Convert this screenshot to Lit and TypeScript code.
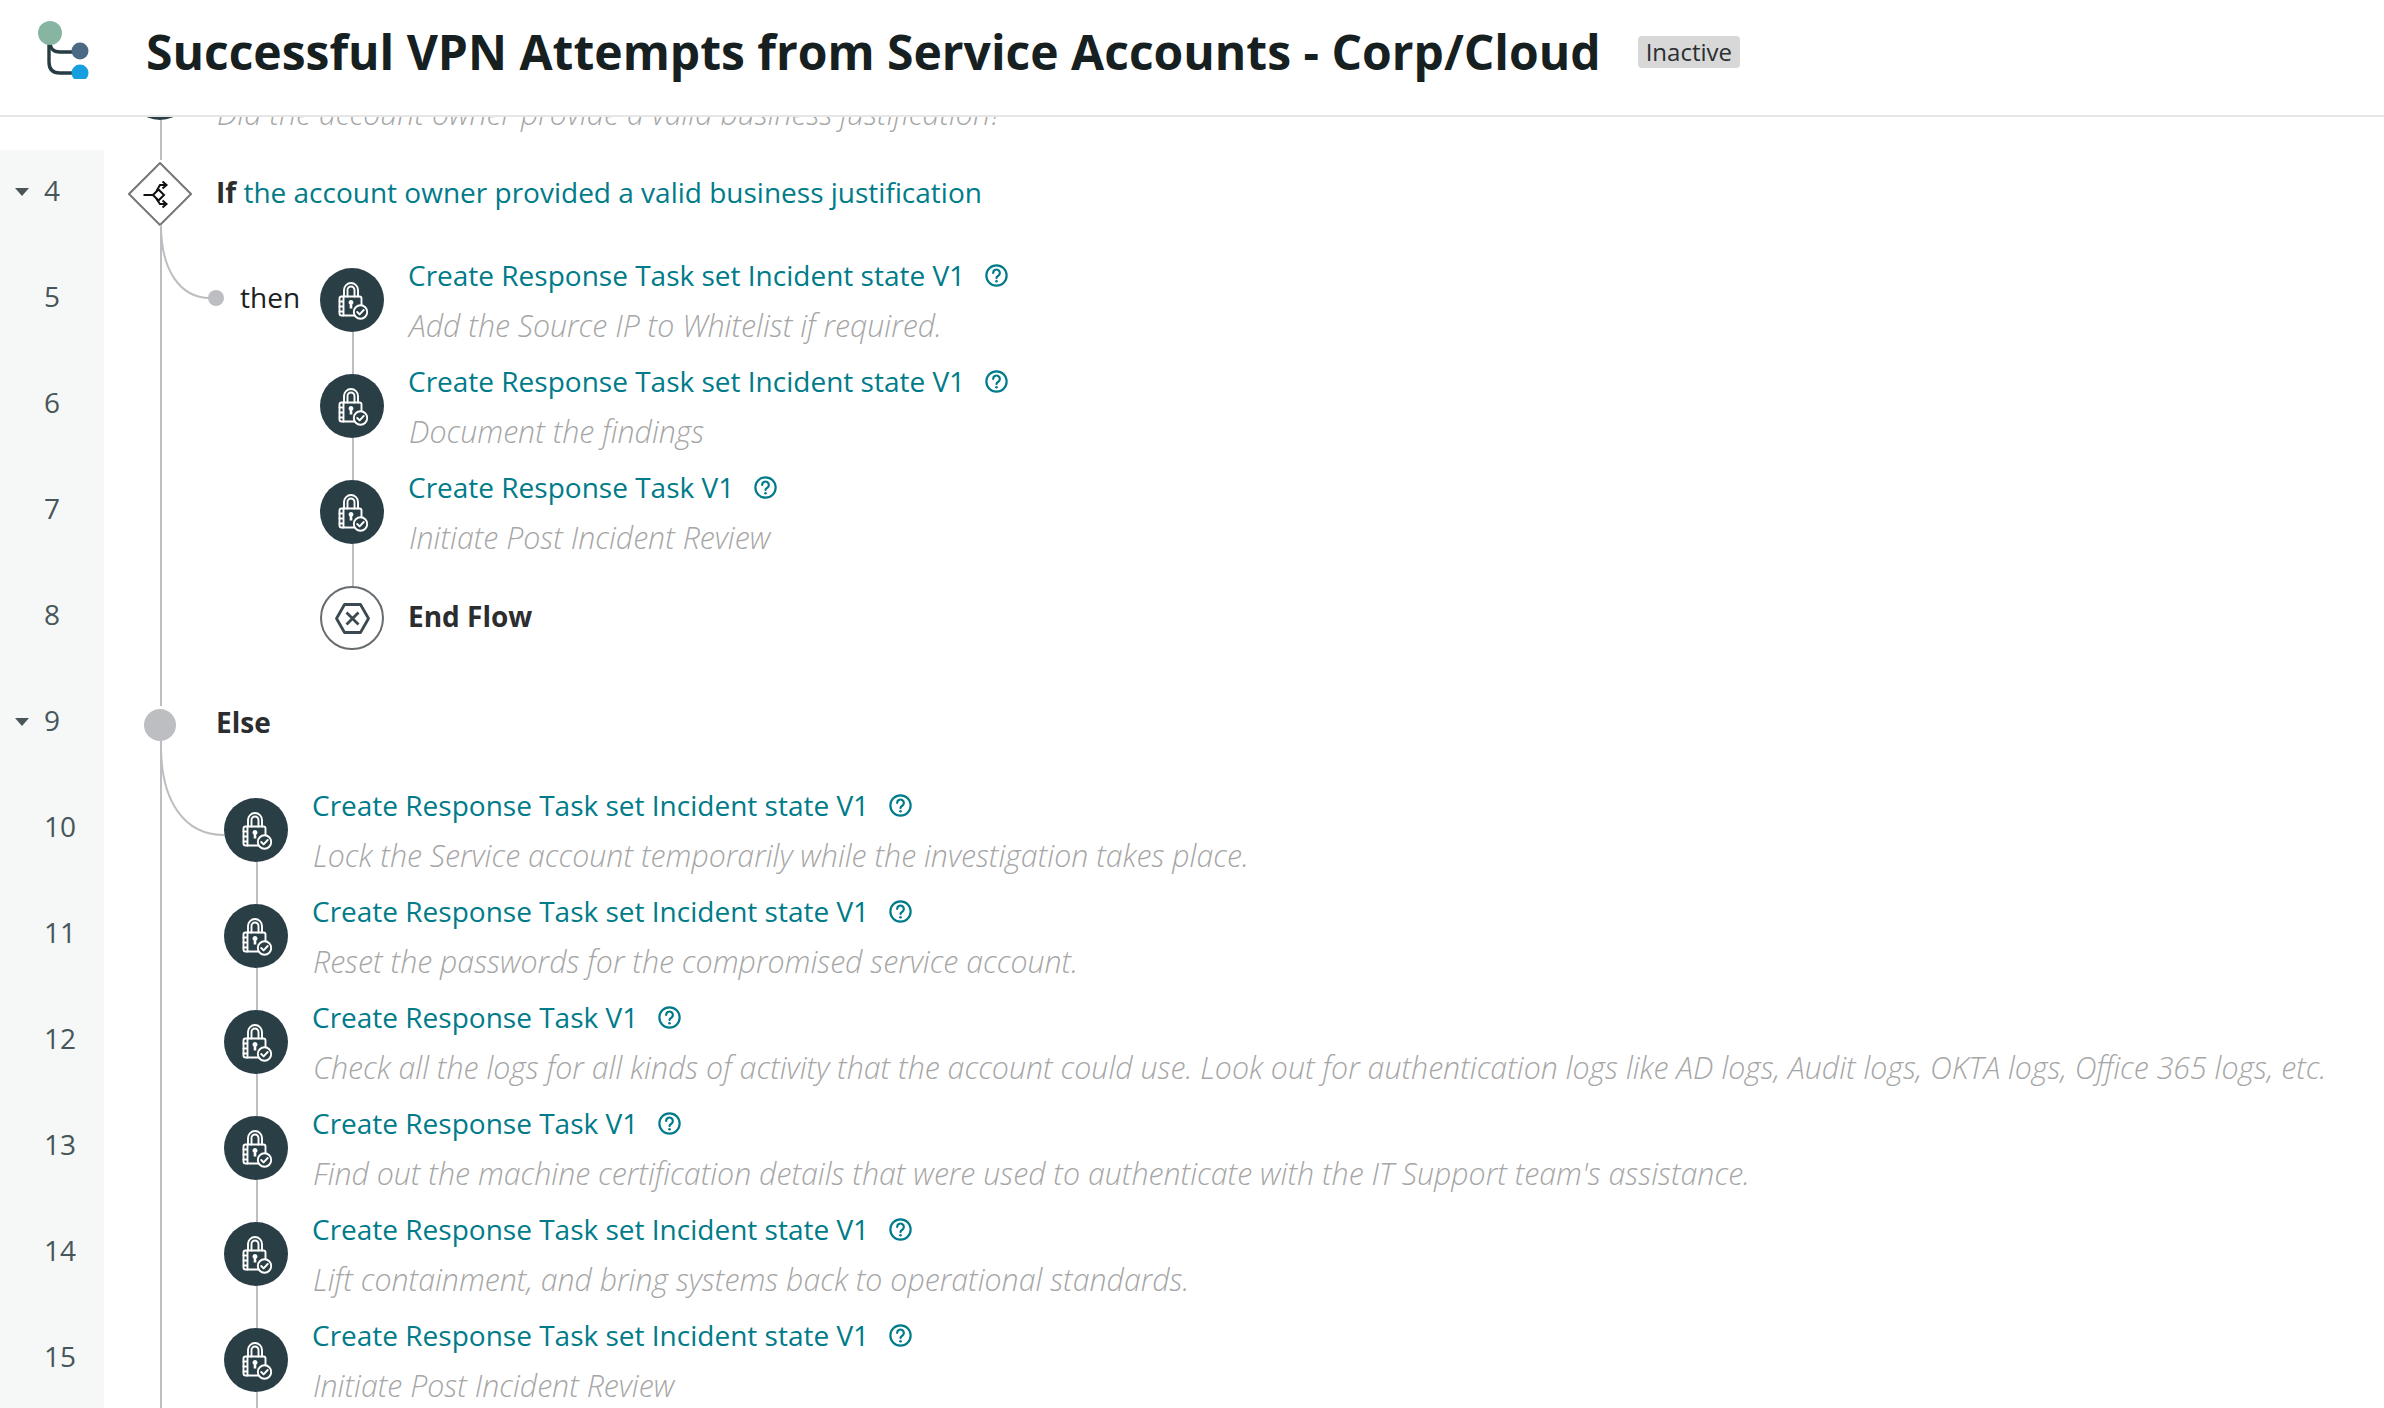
import { LitElement, html, css, svg } from "lit";
import { customElement } from "lit/decorators.js";

const lockIcon = svg`
  <g transform="translate(1 0.5)">
    <g fill="none" stroke="#fff" stroke-width="1.9" stroke-linejoin="round" stroke-linecap="round">
      <path d="M23 28v-6.500a7 7 0 0 1 14 0v6.500"/>
      <path d="M26.500 28v-6.500a3.500 3.500 0 0 1 7 0v6.500"/>
      <rect x="18.500" y="28" width="22" height="19" rx="2"/>
      <path d="M22.500 28v19M18.500 33h4M18.500 38h4M18.500 43h4"/>
    </g>
    <path d="M30 31.500a2.500 2.500 0 0 1 1.300 4.600v3.900h-2.600v-3.900a2.500 2.500 0 0 1 1.300-4.600z" fill="#fff"/>
    <circle cx="39.500" cy="43.500" r="6.700" fill="#2a3f45" stroke="#fff" stroke-width="1.9"/>
    <path d="M36.200 43.500l2.400 2.400 4.100-4.400" fill="none" stroke="#fff" stroke-width="1.9" stroke-linecap="round" stroke-linejoin="round"/>
  </g>
`;

type Row = { n: number; kind: string; title?: string; sub?: string; lvl?: number; link?: boolean };

const A = "Create Response Task set Incident state V1";
const B = "Create Response Task V1";

const rows: Row[] = [
  { n: 3, kind: "top", sub: "Did the account owner provide a valid business justification?" },
  { n: 4, kind: "if" },
  { n: 5, kind: "step", lvl: 1, link: true, title: A, sub: "Add the Source IP to Whitelist if required." },
  { n: 6, kind: "step", lvl: 1, link: true, title: A, sub: "Document the findings" },
  { n: 7, kind: "step", lvl: 1, link: true, title: B, sub: "Initiate Post Incident Review" },
  { n: 8, kind: "end" },
  { n: 9, kind: "else" },
  { n: 10, kind: "step", lvl: 2, link: true, title: A, sub: "Lock the Service account temporarily while the investigation takes place." },
  { n: 11, kind: "step", lvl: 2, link: true, title: A, sub: "Reset the passwords for the compromised service account." },
  { n: 12, kind: "step", lvl: 2, link: true, title: B, sub: "Check all the logs for all kinds of activity that the account could use. Look out for authentication logs like AD logs, Audit logs, OKTA logs, Office 365 logs, etc." },
  { n: 13, kind: "step", lvl: 2, link: true, title: B, sub: "Find out the machine certification details that were used to authenticate with the IT Support team's assistance." },
  { n: 14, kind: "step", lvl: 2, link: true, title: A, sub: "Lift containment, and bring systems back to operational standards." },
  { n: 15, kind: "step", lvl: 2, link: true, title: A, sub: "Initiate Post Incident Review" },
];

@customElement("app-root")
export class AppRoot extends LitElement {
  static styles = css`
    :host {
      display: flex;
      flex-direction: column;
      width: 2384px;
      height: 1408px;
      overflow: hidden;
      background: #fff;
      font-family: "Open Sans", "Noto Sans", sans-serif;
      font-size: 28px;
      color: #1a2022;
    }
    header {
      position: relative;
      z-index: 2;
      flex: none;
      display: flex;
      align-items: center;
      height: 115px;
      background: #fff;
      border-bottom: 2px solid #e6e6e6;
      padding-left: 32px;
    }
    .logo { width: 62px; height: 70px; flex: none; margin-right: 52px; align-self: flex-start; margin-top: 9px; }
    h1 {
      margin: -12px 0 0 0;
      font-size: 48px;
      font-weight: 700;
      line-height: 64px;
      color: #172021;
      white-space: nowrap;
    }
    .badge {
      margin: -12px 0 0 37px;
      height: 32px;
      line-height: 32px;
      padding: 0 8px;
      border-radius: 4px;
      background: #d8d8d8;
      font-size: 24px;
      color: #2a2f30;
    }
    .list { flex: none; margin-top: -73px; }
    .row { display: grid; grid-template-columns: 104px 1fr; height: 106px; }
    .gutter {
      background: #f6f8f7;
      display: flex;
      align-items: flex-start;
      padding-left: 15px;
      color: #47565a;
      line-height: 81px;
    }
    .gutter.blank { background: transparent; }
    .caret {
      flex: none;
      width: 0;
      height: 0;
      margin-top: 38px;
      border-left: 7px solid transparent;
      border-right: 7px solid transparent;
      border-top: 8px solid #4a5557;
    }
    .slot { flex: none; width: 14px; }
    .num { margin-left: 15px; }
    .content { position: relative; display: flex; align-items: flex-start; min-width: 0; }
    .trunk { position: absolute; left: 56px; width: 2px; background: #bdbec2; top: 0; bottom: 0; }
    .trunk.from-node { top: 76px; }
    .trunk.to-diamond { bottom: auto; height: 10px; }
    .trunk.from-diamond { top: 75px; }
    .trunk.to-else { bottom: auto; height: 26px; }
    .trunk.from-else { top: 61px; }
    .curve { position: absolute; left: 0; top: 0; width: 10px; height: 10px; overflow: visible; }
    .curve path { fill: none; stroke: #bdbec2; stroke-width: 2; }
    .thendot {
      position: absolute;
      left: 104px;
      top: 34px;
      width: 16px;
      height: 16px;
      border-radius: 50%;
      background: #bdbec2;
    }
    .then { flex: none; width: 80px; margin-left: 136px; line-height: 82px; }
    .step { display: flex; align-items: flex-start; gap: 24px; }
    .step.lvl2 { margin-left: 120px; }
    .step.top { margin-left: 24px; }
    .node {
      position: relative;
      flex: none;
      width: 64px;
      height: 64px;
      margin-top: 12px;
      border-radius: 50%;
      background: #2a3f45;
    }
    .node svg { display: block; width: 64px; height: 64px; }
    .node.link::after {
      content: "";
      position: absolute;
      left: 32px;
      top: 100%;
      width: 2px;
      height: 42px;
      background: #bdbec2;
    }
    .node.end { background: #fff; box-sizing: border-box; border: 2px solid #666c70; }
    .node.end svg { width: 60px; height: 60px; }
    .title {
      display: flex;
      align-items: center;
      gap: 20px;
      line-height: 38px;
      color: #007b8a;
      white-space: nowrap;
    }
    .help { width: 23px; height: 23px; flex: none; margin-top: 1px; }
    .sub {
      margin-top: 13px;
      margin-left: 1px;
      line-height: 38px;
      font-size: 30.3px;
      font-weight: 300;
      font-style: italic;
      color: #a6a6a6;
      white-space: nowrap;
    }
    .diamond { flex: none; width: 64px; height: 64px; margin: 12px 24px 0 24px; display: block; }
    .cond { line-height: 84px; color: #007b8a; white-space: nowrap; }
    .cond b, .strong { font-weight: 700; color: #2b2d2e; }
    .strong { line-height: 84px; }
    .elsedot {
      flex: none;
      width: 32px;
      height: 32px;
      margin: 29px 40px 0 40px;
      border-radius: 50%;
      background: #bdbec2;
    }
  `;

  private help() {
    return html`<svg class="help" viewBox="0 0 22 22">
      <circle cx="11" cy="11" r="9.700" fill="none" stroke="#007b8a" stroke-width="2.100"/>
      <path d="M7.800 8.500a3.200 3.200 0 1 1 4.900 2.700c-1.100.6-1.700 1.100-1.700 2.300" fill="none" stroke="#007b8a" stroke-width="2.100" stroke-linecap="round"/>
      <circle cx="11" cy="16.500" r="1.300" fill="#007b8a"/>
    </svg>`;
  }

  private lockNode(link?: boolean) {
    return html`<div class="node ${link ? "link" : ""}"><svg viewBox="0 0 64 64">${lockIcon}</svg></div>`;
  }

  private texts(r: Row) {
    return html`<div>
      <div class="title"><span>${r.title}</span>${this.help()}</div>
      <div class="sub">${r.sub}</div>
    </div>`;
  }

  private content(r: Row) {
    switch (r.kind) {
      case "top":
        return html`<div class="trunk from-node"></div>
          <div class="step top">
            ${this.lockNode()}
            <div><div class="title">&nbsp;</div><div class="sub">${r.sub}</div></div>
          </div>`;
      case "if":
        return html`<div class="trunk to-diamond"></div><div class="trunk from-diamond"></div>
          <svg class="diamond" viewBox="0 0 64 64">
            <path d="M32 1L63 32L32 63L1 32Z" fill="#fff" stroke="#777" stroke-width="2"/>
            <g fill="none" stroke="#111" stroke-width="2">
              <path d="M15.500 33H25L30.500 27.500L36 33L30.500 38.500L25 33"/>
              <path d="M28.500 29L32 23H38M34.500 19.500L38.500 23L34.500 26.500"/>
              <path d="M28.500 37L32 42H38M34.500 38.500L38.500 42L34.500 45.500"/>
            </g>
          </svg>
          <div class="cond"><b>If</b> the account owner provided a valid business justification</div>`;
      case "end":
        return html`<div class="trunk"></div>
          <div class="then"></div>
          <div class="step">
            <div class="node end"><svg viewBox="0 0 60 60">
              <path d="M14.500 30.500L22.500 16.500H38.500L46.500 30.500L38.500 44.500H22.500Z" fill="none" stroke="#3a4a50" stroke-width="2.800" stroke-linejoin="round"/>
              <path d="M24.500 24.500L36.500 36.500M36.500 24.500L24.500 36.500" fill="none" stroke="#3a4a50" stroke-width="2.800"/>
            </svg></div>
            <div class="strong">End Flow</div>
          </div>`;
      case "else":
        return html`<div class="trunk to-else"></div><div class="trunk from-else"></div>
          <div class="elsedot"></div><div class="strong">Else</div>`;
      default:
        if (r.lvl === 1) {
          return html`<div class="trunk"></div>
            ${r.n === 5
              ? html`<svg class="curve"><path d="M57 -31C57 14 76 42 106 42"/></svg><div class="thendot"></div>`
              : null}
            <div class="then">${r.n === 5 ? "then" : ""}</div>
            <div class="step">${this.lockNode(r.link)}${this.texts(r)}</div>`;
        }
        return html`<div class="trunk"></div>
          ${r.n === 10 ? html`<svg class="curve"><path d="M57 -40C57 15 80 49 120 49"/></svg>` : null}
          <div class="step lvl2">${this.lockNode(r.link)}${this.texts(r)}</div>`;
    }
  }

  render() {
    return html`
      <header>
        <svg class="logo" viewBox="0 0 62 70">
          <g fill="none" stroke="#263d43" stroke-width="3.400">
            <path d="M18 32C18 40 21 43 28 43H42"/>
            <path d="M17 34V53Q17 64 28 64H42"/>
          </g>
          <circle cx="18" cy="24" r="12" fill="#86b5a1"/>
          <circle cx="48" cy="42" r="8.500" fill="#4b6a85"/>
          <circle cx="48" cy="64" r="8.500" fill="#159fe0"/>
        </svg>
        <h1>Successful VPN Attempts from Service Accounts - Corp/Cloud</h1>
        <span class="badge">Inactive</span>
      </header>
      <div class="list">
        ${rows.map(
          (r) => html`<div class="row">
            <div class="gutter ${r.kind === "top" ? "blank" : ""}">
              ${r.kind === "if" || r.kind === "else" ? html`<span class="caret"></span>` : html`<span class="slot"></span>`}
              <span class="num">${r.n}</span>
            </div>
            <div class="content">${this.content(r)}</div>
          </div>`
        )}
      </div>
    `;
  }
}
